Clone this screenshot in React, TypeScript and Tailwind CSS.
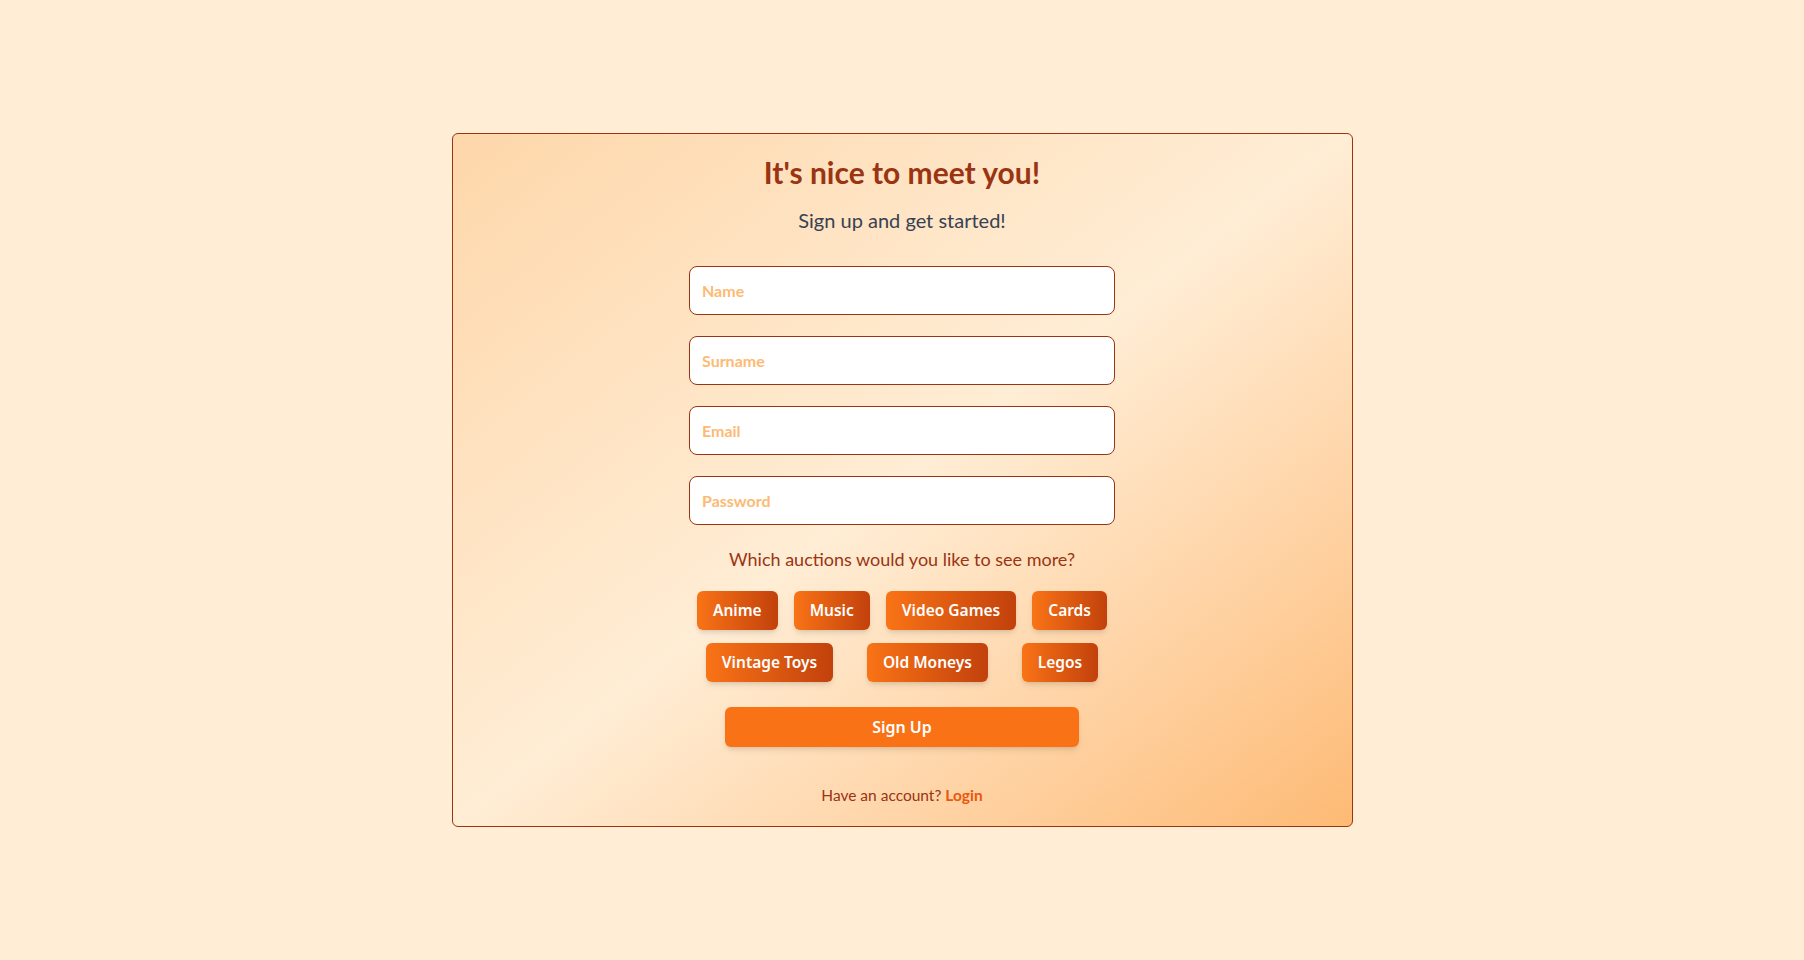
import React from "react";

const categories = [
  "Anime",
  "Music",
  "Video Games",
  "Cards",
  "Vintage Toys",
  "Old Moneys",
  "Legos",
];

const fields = ["Name", "Surname", "Email", "Password"];

export default function App() {
  return (
    <div className="min-h-screen w-full bg-[#ffedd5] flex justify-center pt-[133px] font-['Lato',sans-serif]">
      <div className="w-[901px] h-[694px] rounded-md border border-[#9a3412] bg-linear-to-br from-[#fed7aa] via-[#ffedd5] to-[#fdba74] flex flex-col items-center pt-[20px]">
        <h1 className="text-[30px] leading-[36px] font-bold text-[#9a3412]">
          It's nice to meet you!
        </h1>
        <p className="mt-[16px] text-[20px] leading-[28px] text-[#374151]">
          Sign up and get started!
        </p>

        <form
          className="mt-[32px] w-[426px] flex flex-col items-center"
          onSubmit={(e) => e.preventDefault()}>
          <div className="w-full flex flex-col gap-[21px]">
            {fields.map((f) => (
              <input
                key={f}
                type={f === "Password" ? "password" : "text"}
                placeholder={f}
                className="w-full h-[49px] rounded-lg border border-[#9a3412] bg-white px-3 text-[16px] font-bold text-[#7c2d12] placeholder:text-[#fdba74] outline-none"
              />
            ))}
          </div>

          <p className="mt-[20px] text-[18px] leading-[28px] text-[#9a3412]">
            Which auctions would you like to see more?
          </p>

          <div className="mt-[18px] w-full flex flex-wrap justify-around gap-y-[13px]">
            {categories.map((c) => (
              <button
                key={c}
                type="button"
                className="h-[39px] px-4 rounded-md bg-linear-to-r from-[#f97316] to-[#c2410c] text-white text-[15.5px] font-semibold shadow-md font-['Noto_Sans',sans-serif]">
                {c}
              </button>
            ))}
          </div>

          <button
            type="submit"
            className="mt-[25px] w-[354px] h-[40px] rounded-md bg-[#f97316] text-white text-[16px] font-semibold shadow-md font-['Noto_Sans',sans-serif]">
            Sign Up
          </button>
        </form>

        <p className="mt-[37px] text-[15.5px] leading-[22px] text-[#9a3412]">
          Have an account?{" "}
          <a href="#" className="font-bold text-[#ea580c]">
            Login
          </a>
        </p>
      </div>
    </div>
  );
}
